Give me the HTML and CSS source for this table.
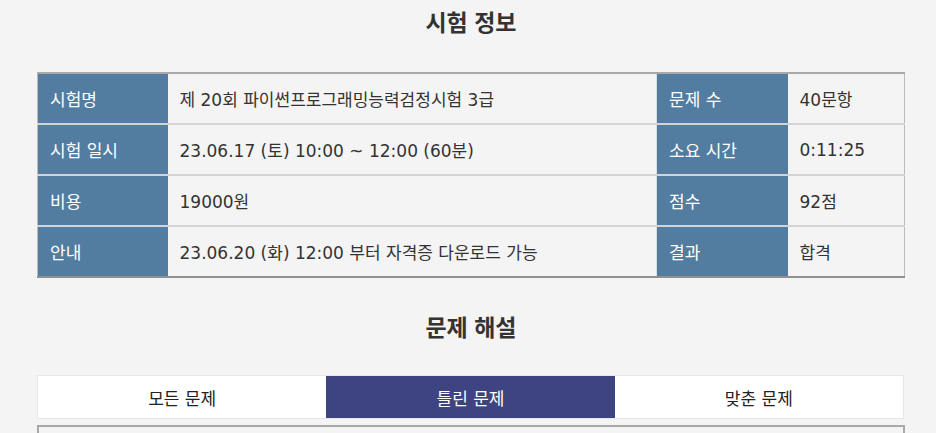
FILE: index.html
```html
<!DOCTYPE html>
<html lang="ko">
<head>
<meta charset="utf-8">
<link rel="stylesheet" href="styles.css">
</head>
<body>
<div class="page">
  <h2 class="title">시험 정보</h2>
  <table class="info">
    <colgroup>
      <col class="c-h1"><col class="c-v1"><col class="c-h2"><col class="c-v2">
    </colgroup>
    <tr>
      <th>시험명</th><td>제 20회 파이썬프로그래밍능력검정시험 3급</td>
      <th>문제 수</th><td>40문항</td>
    </tr>
    <tr>
      <th>시험 일시</th><td>23.06.17 (토) 10:00 ~ 12:00 (60분)</td>
      <th>소요 시간</th><td>0:11:25</td>
    </tr>
    <tr>
      <th>비용</th><td>19000원</td>
      <th>점수</th><td>92점</td>
    </tr>
    <tr>
      <th>안내</th><td>23.06.20 (화) 12:00 부터 자격증 다운로드 가능</td>
      <th>결과</th><td>합격</td>
    </tr>
  </table>
  <h2 class="title title2">문제 해설</h2>
  <div class="tabs">
    <div class="tab">모든 문제</div>
    <div class="tab active">틀린 문제</div>
    <div class="tab">맞춘 문제</div>
  </div>
  <div class="box"></div>
</div>
</body>
</html>
```
FILE: styles.css
```css
html, body {
  margin: 0;
  padding: 0;
  background: #f4f4f4;
  font-family: "DejaVu Sans", "Noto Sans CJK KR", sans-serif;
  color: #333;
  overflow: hidden;
}
.page {
  width: 868px;
  margin: 0 0 0 37px;
}
.title {
  margin: 0;
  padding-top: 5px;
  height: 72px;
  box-sizing: border-box;
  text-align: center;
  font-size: 23px;
  font-weight: 700;
  line-height: 32px;
  color: #333;
  font-family: "Noto Sans CJK KR", sans-serif;
}
.title2 {
  height: 98px;
  padding-top: 32px;
}
.info {
  width: 867px;
  border-collapse: collapse;
  table-layout: fixed;
  border-top: 2px solid #a9a9a9;
  border-bottom: 2px solid #8f8f8f;
  border-left: 1px solid #bbb;
  border-right: 1px solid #bbb;
}
.c-h1 { width: 130px; }
.c-v1 { width: 489px; }
.c-h2 { width: 131px; }
.c-v2 { width: 117px; }
.info tr {
  height: 51px;
  border-top: 2px solid #d4d4d4;
}
.info tr:first-child { border-top: none; }
.info th, .info td {
  padding: 0 0 0 12px;
  text-align: left;
  font-size: 17px;
  font-weight: 400;
  vertical-align: middle;
  white-space: nowrap;
}
.info th {
  background: #537da0;
  color: #fff;
}
.info td { background: #f4f4f4; color: #333; }
.info td:nth-of-type(1) { border-right: 1px solid #ddd; }
.tabs {
  display: flex;
  height: 44px;
  border: 1px solid #e6e6e6;
  box-sizing: border-box;
  width: 867px;
  margin-top: -1px;
}
.tab {
  flex: 1;
  display: flex;
  align-items: center;
  justify-content: center;
  background: #fff;
  font-size: 17px;
  color: #222;
}
.tab.active {
  background: #3d4481;
  color: #fff;
}
.box {
  margin-top: 6px;
  height: 40px;
  border: 2px solid #a9a9a9;
  border-bottom: none;
  box-sizing: border-box;
  width: 868px;
  background: #f4f4f4;
}
```
